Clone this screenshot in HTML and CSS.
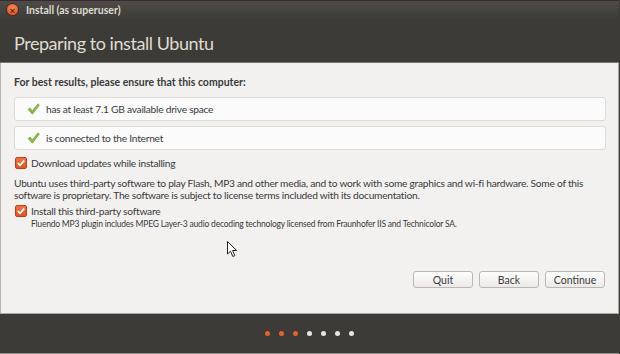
FILE: index.html
```html
<!DOCTYPE html>
<html lang="en">
<head>
  <meta charset="UTF-8" />
  <title>Install (as superuser)</title>
  <link rel="stylesheet" href="styles.css">
</head>
<body>
<div class="window">
  <div class="header">
    <div class="titlebar">
      <span class="close-btn"><span class="close-x">×</span></span>
      <span class="title">Install (as superuser)</span>
    </div>
    <h1>Preparing to install Ubuntu</h1>
  </div>

  <div class="content">
    <div class="lead">For best results, please ensure that this computer:</div>

    <div class="req">
      <svg class="tick" width="13" height="12" viewBox="0 0 13 12"><path d="M1 6.5 L3.2 5 L5.2 8 L11 0.8 L12.4 2 L5.4 11.2 Z" fill="#86b841" stroke="#6d9a30" stroke-width="0.6"/></svg>
      <span>has at least 7.1 GB available drive space</span>
    </div>
    <div class="req">
      <svg class="tick" width="13" height="12" viewBox="0 0 13 12"><path d="M1 6.5 L3.2 5 L5.2 8 L11 0.8 L12.4 2 L5.4 11.2 Z" fill="#86b841" stroke="#6d9a30" stroke-width="0.6"/></svg>
      <span>is connected to the Internet</span>
    </div>

    <label class="check-row updates">
      <span class="checkbox"><svg width="10" height="10" viewBox="0 0 10 10"><path d="M1.8 5 L4 7.3 L8.2 2.6" fill="none" stroke="#fff" stroke-width="1.7"/></svg></span>
      <span>Download updates while installing</span>
    </label>

    <p class="info">Ubuntu uses third-party software to play Flash, MP3 and other media, and to work with some graphics and wi-fi hardware. Some of this<br>software is proprietary. The software is subject to license terms included with its documentation.</p>

    <label class="check-row">
      <span class="checkbox"><svg width="10" height="10" viewBox="0 0 10 10"><path d="M1.8 5 L4 7.3 L8.2 2.6" fill="none" stroke="#fff" stroke-width="1.7"/></svg></span>
      <span>Install this third-party software</span>
    </label>
    <div class="note">Fluendo MP3 plugin includes MPEG Layer-3 audio decoding technology licensed from Fraunhofer IIS and Technicolor SA.</div>

    <div class="buttons">
      <button>Quit</button>
      <button>Back</button>
      <button>Continue</button>
    </div>

    <svg class="cursor" width="11" height="17" viewBox="0 0 11 17"><path d="M0.5 0.5 L0.5 13 L3.5 10.2 L5.8 15.5 L7.8 14.6 L5.6 9.5 L9.6 9.5 Z" fill="#fff" stroke="#222" stroke-width="1"/></svg>
  </div>

  <div class="footer">
    <span class="dot done"></span>
    <span class="dot done"></span>
    <span class="dot done"></span>
    <span class="dot"></span>
    <span class="dot"></span>
    <span class="dot"></span>
    <span class="dot"></span>
  </div>
</div>
</body>
</html>
```

FILE: styles.css
```css
body {
  margin: 0;
  padding: 0;
  width: 620px;
  height: 354px;
  overflow: hidden;
  background-color: #3c3b37;
  font-family: Lato, "Open Sans", sans-serif;
}
.window {
  width: 619px;
  height: 354px;
  display: flex;
  flex-direction: column;
}
.header {
  height: 61px;
  border-top: 1px solid #3b2433;
  border-bottom: 1px solid #77756f;
  background: linear-gradient(#4d4c47, #3c3b37 18px, #3c3b37);
  color: #dfdbd2;
}
.titlebar {
  height: 17px;
  display: flex;
  align-items: center;
}
.close-btn {
  width: 11px;
  height: 11px;
  margin-left: 7px;
  border-radius: 50%;
  background: radial-gradient(circle at 50% 35%, #f7875a, #df4b17);
  box-shadow: 0 0 0 1px #4a2a1e;
  display: flex;
  align-items: center;
  justify-content: center;
}
.close-x {
  font-size: 10px;
  line-height: 10px;
  color: #5a2412;
  font-weight: bold;
}
.title {
  margin-left: 8px;
  font-size: 10.5px;
  font-weight: bold;
  color: #dfdbd2;
}
h1 {
  margin: 13px 0 0 14px;
  font-size: 18px;
  letter-spacing: -0.45px;
  font-weight: normal;
  line-height: 24px;
}
.content {
  position: relative;
  height: 238px;
  background-color: #f2f1f0;
  border-left: 1px solid #b5b3ae;
  border-right: 1px solid #aaa8a3;
  border-bottom: 1px solid #a9a7a2;
  padding: 12px 12px 0 13px;
  color: #3a3a3a;
  font-size: 10.2px;
  letter-spacing: -0.25px;
  display: flex;
  flex-direction: column;
}
.lead {
  font-weight: bold;
  font-size: 10.5px;
  letter-spacing: 0;
  line-height: 14px;
}
.req {
  margin-top: 8px;
  height: 22px;
  background-color: #fbfbfb;
  border: 1px solid #dedbd6;
  border-radius: 3px;
  display: flex;
  align-items: center;
  padding-left: 12px;
}
.req + .req {
  margin-top: 5px;
}
.tick {
  margin-right: 6px;
}
.check-row {
  display: flex;
  align-items: center;
  line-height: 14px;
  margin-top: 3px;
  padding-left: 1px;
}
.updates {
  margin-top: 6px;
}
.checkbox {
  width: 10px;
  height: 10px;
  border-radius: 2px;
  background: linear-gradient(#ec7447, #dd5522);
  border: 1px solid #b8431b;
  margin-right: 4px;
  display: flex;
}
.info {
  margin: 7px 0 0 0;
  line-height: 12px;
  white-space: nowrap;
}
.note {
  margin-left: 17px;
  font-size: 8.5px;
  letter-spacing: -0.2px;
  line-height: 12px;
}
.buttons {
  margin-top: 41px;
  display: flex;
  justify-content: flex-end;
  gap: 6px;
  padding-right: 1px;
}
button {
  width: 60px;
  height: 17px;
  padding: 0;
  font-family: Lato, "Open Sans", sans-serif;
  font-size: 10.5px;
  color: #3c3c3c;
  background: linear-gradient(#fdfdfd, #ebeae8);
  border: 1px solid #bcb8b1;
  border-radius: 3px;
}
.cursor {
  position: absolute;
  left: 226px;
  top: 178px;
}
.footer {
  flex: 1;
  background-color: #3c3b37;
  border-bottom: 1px solid #8a8884;
  display: flex;
  justify-content: center;
  align-items: center;
  gap: 9px;
}
.dot {
  width: 5px;
  height: 5px;
  border-radius: 50%;
  background-color: #e6e6e4;
}
.dot.done {
  background-color: #e2612f;
}
```
